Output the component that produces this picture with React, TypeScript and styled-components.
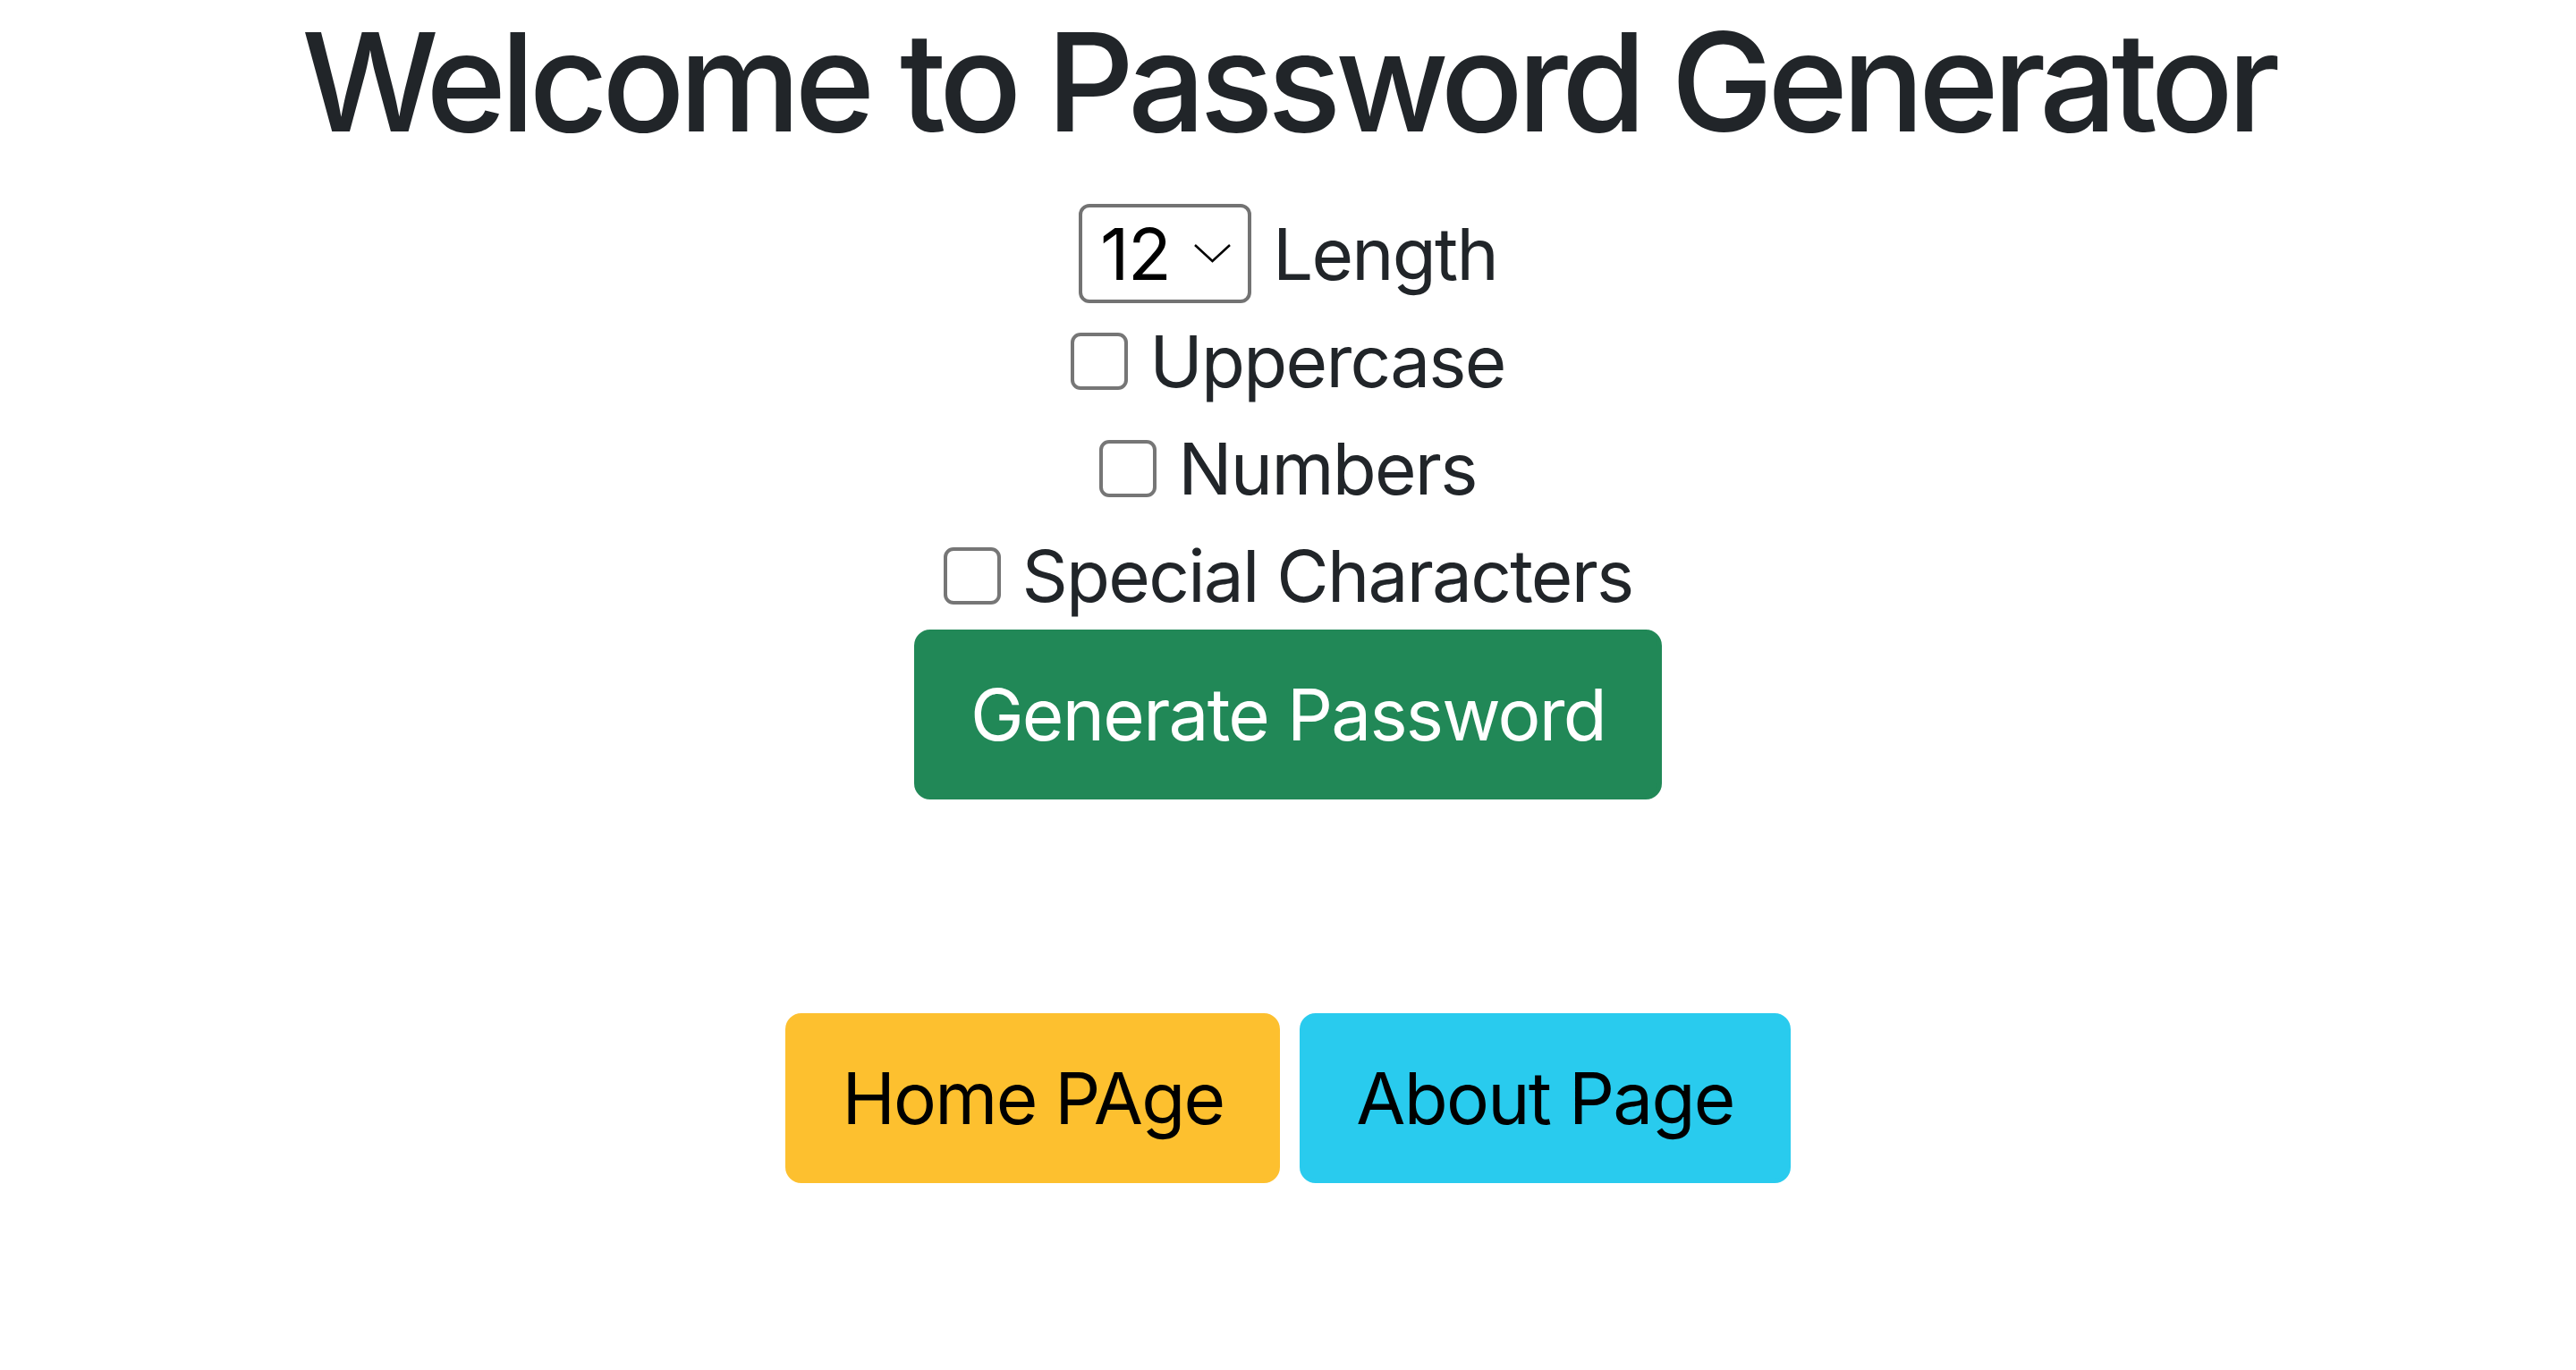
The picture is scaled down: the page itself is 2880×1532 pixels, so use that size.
import { useState } from "react"
import styled, { createGlobalStyle } from "styled-components"

const GlobalStyle = createGlobalStyle`
  html, body {
    margin: 0;
    padding: 0;
    background: #ffffff;
  }
  body {
    font-family: Inter, "Noto Sans", "Liberation Sans", sans-serif;
    color: #212529;
  }
`

const Page = styled.div`
  display: flex;
  flex-direction: column;
  align-items: center;
  min-height: 1532px;
  font-size: 80px;
  line-height: 1.5;
  letter-spacing: -0.022em;
`

const Title = styled.h1`
  margin: 0 0 40px;
  font-size: 153px;
  font-weight: 500;
  line-height: 1.2;
  letter-spacing: -0.043em;
  color: #212529;
`

const Row = styled.div`
  display: flex;
  align-items: center;
  justify-content: center;
  height: 120px;
  gap: 24px;
`

const SelectWrap = styled.div`
  position: relative;
  display: inline-flex;
`

const Select = styled.select`
  appearance: none;
  width: 193px;
  height: 111px;
  box-sizing: border-box;
  padding: 0 0 0 20px;
  border: 4px solid #737373;
  border-radius: 12px;
  background: #ffffff;
  color: #000000;
  font-family: inherit;
  font-size: 80px;
  letter-spacing: -0.02em;
  line-height: 1;
`

const Chevron = styled.svg`
  position: absolute;
  right: 22px;
  top: 44px;
  width: 43px;
  height: 22px;
  pointer-events: none;
`

const Checkbox = styled.input.attrs({ type: "checkbox" })`
  appearance: none;
  margin: 0;
  width: 64px;
  height: 64px;
  box-sizing: border-box;
  border: 4px solid #767676;
  border-radius: 11px;
  background: #ffffff;

  &:checked {
    background: #0075ff;
    border-color: #0075ff;
  }
`

const Label = styled.label`
  color: #212529;
`

const Button = styled.button<{ $bg: string; $fg: string }>`
  height: 190px;
  box-sizing: border-box;
  padding: 0 58px;
  border: 5px solid ${(p) => p.$bg};
  border-radius: 18px;
  background: ${(p) => p.$bg};
  color: ${(p) => p.$fg};
  font-family: inherit;
  font-size: 80px;
  font-weight: 400;
  line-height: 1.5;
  letter-spacing: -0.022em;
  cursor: pointer;
`

const NavRow = styled.div`
  display: flex;
  gap: 22px;
  margin-top: 239px;
`

export default function App() {
  const [length, setLength] = useState("12")
  const [opts, setOpts] = useState({ upper: false, numbers: false, special: false })

  const toggle = (key: keyof typeof opts) =>
    setOpts((prev) => ({ ...prev, [key]: !prev[key] }))

  return (
    <>
      <GlobalStyle />
      <Page>
        <Title>Welcome to Password Generator</Title>
        <Row>
          <SelectWrap>
            <Select value={length} onChange={(e) => setLength(e.target.value)}>
              {[8, 10, 12, 14, 16, 20].map((n) => (
                <option key={n} value={n}>
                  {n}
                </option>
              ))}
            </Select>
            <Chevron viewBox="0 0 43 22" fill="none">
              <path d="M2 2 L21.5 20 L41 2" stroke="#000" strokeWidth="2.5" />
            </Chevron>
          </SelectWrap>
          <Label>Length</Label>
        </Row>
        <Row>
          <Checkbox id="upper" checked={opts.upper} onChange={() => toggle("upper")} />
          <Label htmlFor="upper">Uppercase</Label>
        </Row>
        <Row>
          <Checkbox id="numbers" checked={opts.numbers} onChange={() => toggle("numbers")} />
          <Label htmlFor="numbers">Numbers</Label>
        </Row>
        <Row>
          <Checkbox id="special" checked={opts.special} onChange={() => toggle("special")} />
          <Label htmlFor="special">Special Characters</Label>
        </Row>
        <Button $bg="#218857" $fg="#ffffff">Generate Password</Button>
        <NavRow>
          <Button $bg="#fdc02f" $fg="#000000">Home PAge</Button>
          <Button $bg="#29cbee" $fg="#000000">About Page</Button>
        </NavRow>
      </Page>
    </>
  )
}
